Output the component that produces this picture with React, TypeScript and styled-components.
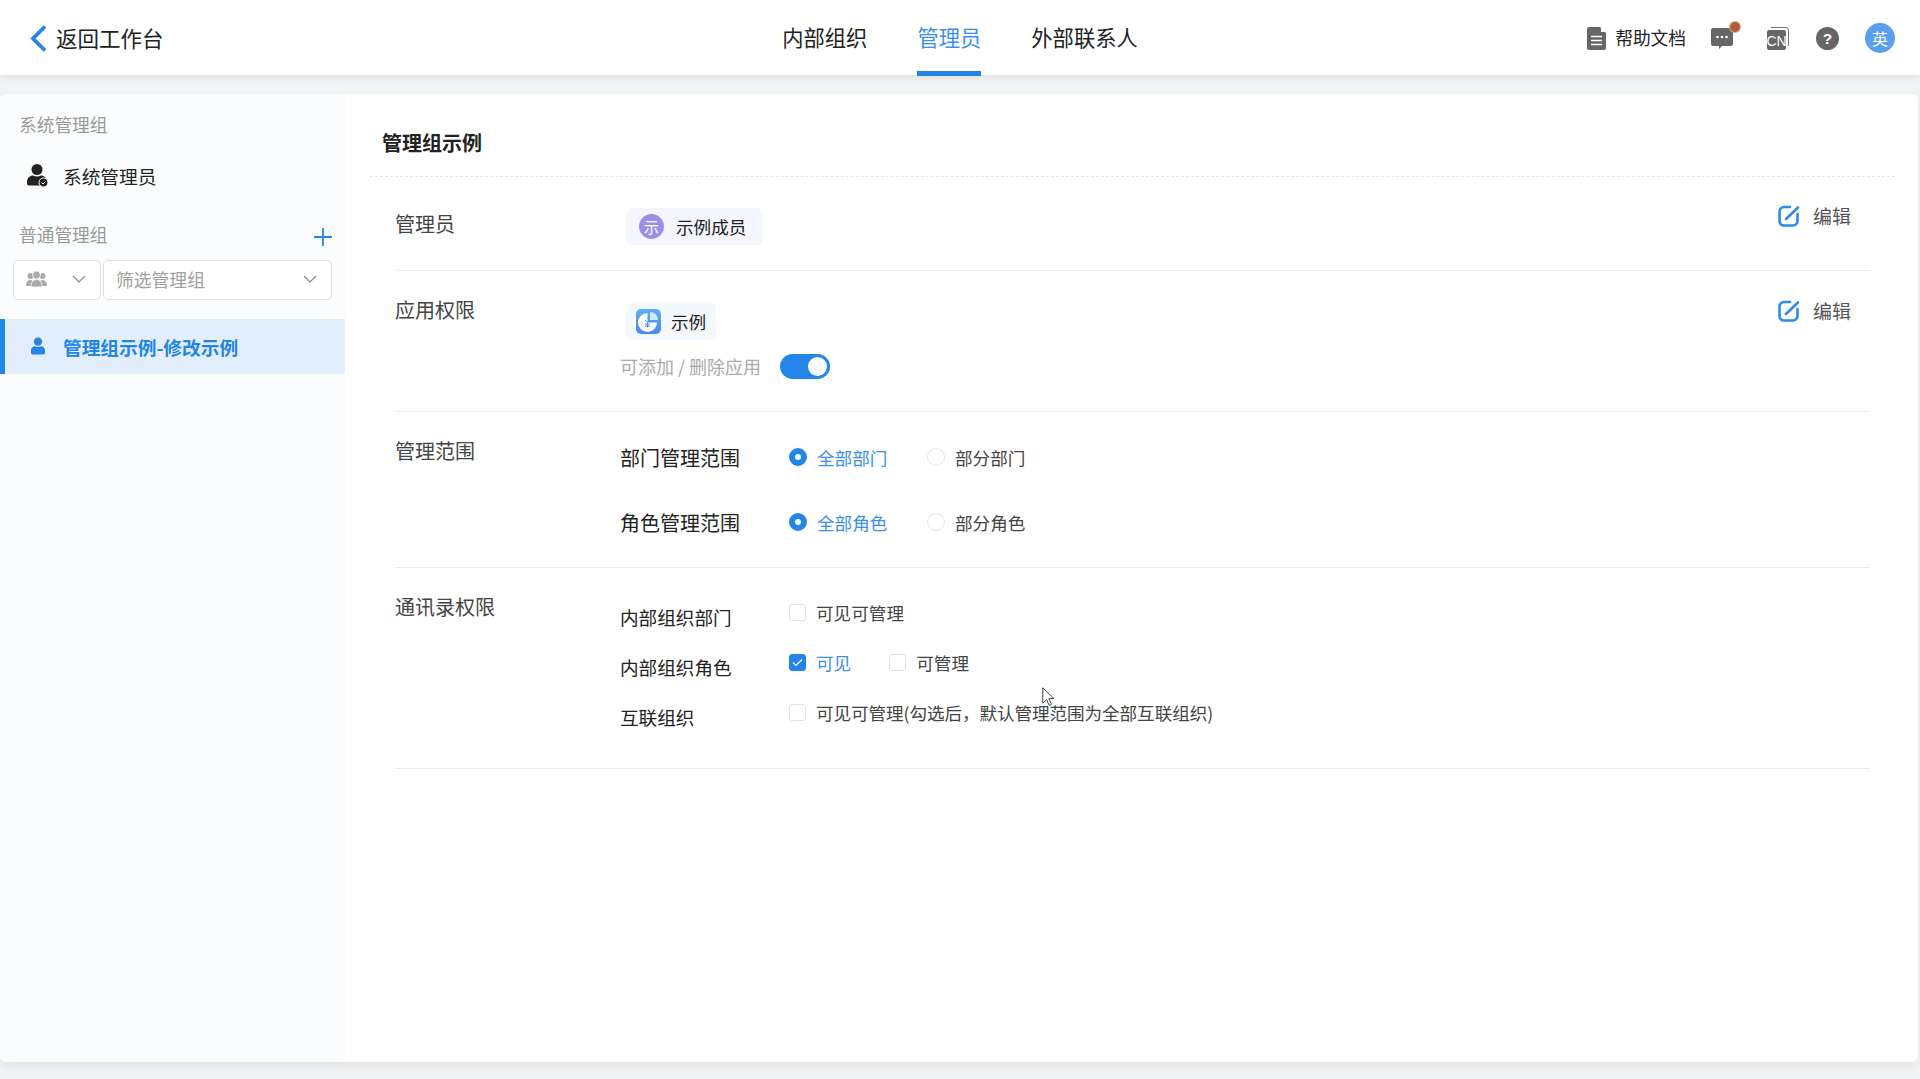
import React from 'react'
import styled, { createGlobalStyle } from 'styled-components'

const BLUE = '#2385e8'

const Global = createGlobalStyle`
  html, body {
    margin: 0;
    padding: 0;
    background: #f2f3f5;
    font-family: "Noto Sans CJK SC", "Noto Sans", sans-serif;
    color: #222;
  }
  * {
    box-sizing: border-box;
  }
`

const Page = styled.div`
  position: relative;
  width: 1920px;
  height: 1079px;
  overflow: hidden;
  display: flex;
  flex-direction: column;
`

const Header = styled.header`
  position: relative;
  z-index: 2;
  flex: none;
  height: 75px;
  background: #fff;
  box-shadow: 0 2px 10px rgba(0, 0, 0, 0.09);
  display: grid;
  grid-template-columns: 1fr auto 1fr;
  align-items: center;
  padding: 0 25px 0 29px;
`

const Back = styled.div`
  display: flex;
  align-items: center;
  gap: 9px;
  font-size: 21.5px;
  color: #222;
`

const RaisedText = styled.span`
  margin-top: -2px;
`

const Tabs = styled.nav`
  display: flex;
  gap: 50px;
  height: 100%;
  margin-right: 4px;
`

const Tab = styled.div<{ $active?: boolean }>`
  height: 76px;
  line-height: 74px;
  font-size: 21.3px;
  color: ${(p) => (p.$active ? '#3b8fe8' : '#222')};
  border-bottom: 5px solid ${(p) => (p.$active ? BLUE : 'transparent')};
`

const Tools = styled.div`
  display: flex;
  align-items: center;
  justify-content: flex-end;
`

const DocLink = styled.div`
  display: flex;
  align-items: center;
  gap: 9px;
  font-size: 17.7px;
  margin-right: 25px;
`

const ToolIcon = styled.div<{ $gap: number }>`
  position: relative;
  display: flex;
  margin-right: ${(p) => p.$gap}px;
`

const Dot = styled.span`
  position: absolute;
  top: -5px;
  right: -7px;
  width: 10px;
  height: 10px;
  border-radius: 50%;
  background: #ad5f3b;
  box-shadow: 0 0 0 1px #e8a77f;
`

const UserAvatar = styled.div`
  width: 30px;
  height: 30px;
  border-radius: 50%;
  background: #5a9fee;
  color: #fff;
  font-size: 16px;
  display: flex;
  align-items: center;
  justify-content: center;
`

const Panel = styled.main`
  flex: none;
  height: 968px;
  margin: 19px 2px 0 0;
  background: #fff;
  border-radius: 6px;
  box-shadow: 0 4px 10px rgba(0, 0, 0, 0.07);
  display: flex;
  overflow: hidden;
`

const Sidebar = styled.aside`
  flex: none;
  width: 345px;
  background: #fbfcfe;
  padding-top: 16px;
`

const GroupTitle = styled.div`
  display: flex;
  align-items: center;
  justify-content: space-between;
  padding: 0 13px 0 19px;
  height: 28px;
  font-size: 17.7px;
  color: #999;
`

const AddIcon = styled.svg`
  margin-top: 5px;
`

const AdminRow = styled.div`
  display: flex;
  align-items: center;
  gap: 15px;
  height: 50px;
  margin: 12px 0 20px;
  padding-left: 27px;
  font-size: 18.7px;
  color: #222;
`

const Filters = styled.div`
  display: flex;
  gap: 2px;
  margin: 12px 13px 19px;
`

const Select = styled.div<{ $width: number }>`
  flex: none;
  width: ${(p) => p.$width}px;
  height: 40px;
  padding: 0 14px 2px 12px;
  background: #fff;
  border: 1px solid #dcdfe6;
  border-radius: 5px;
  display: flex;
  align-items: center;
  justify-content: space-between;
  font-size: 17.8px;
  color: #a0a0a0;
`

const ActiveItem = styled.div`
  height: 55px;
  display: flex;
  align-items: center;
  gap: 17px;
  padding: 0 0 1px 25px;
  background: #e2eefb;
  border-left: 5px solid ${BLUE};
  font-size: 18.7px;
  font-weight: 700;
  color: ${BLUE};
`

const Content = styled.section`
  flex: 1;
  padding: 0 23px 0 25px;
`

const Title = styled.h2`
  margin: 0 0 8px;
  height: 83px;
  line-height: 98px;
  padding-left: 12px;
  font-size: 20px;
  font-weight: 700;
  color: #222;
  border-bottom: 1px dashed #e4e6eb;
`

const Row = styled.div<{ $bottom: number }>`
  position: relative;
  display: flex;
  margin: 0 25px;
  padding: 24px 0 ${(p) => p.$bottom}px;
  border-bottom: 1px solid #e8eaf0;
`

const RowLabel = styled.div`
  flex: none;
  width: 225px;
  font-size: 20px;
  line-height: 30px;
  color: #444;
`

const RowBody = styled.div<{ $top?: number; $gap?: number }>`
  flex: 1;
  margin-top: ${(p) => p.$top ?? 0}px;
  display: flex;
  flex-direction: column;
  gap: ${(p) => p.$gap ?? 0}px;
`

const Chip = styled.div<{ $bg: string; $width: number; $pad: number; $gap: number }>`
  width: ${(p) => p.$width}px;
  height: 37px;
  margin-left: 6px;
  padding-left: ${(p) => p.$pad}px;
  display: flex;
  align-items: center;
  gap: ${(p) => p.$gap}px;
  border-radius: 6px;
  background: ${(p) => p.$bg};
  font-size: 17.6px;
  color: #222;
`

const MemberAvatar = styled.span`
  width: 25px;
  height: 25px;
  border-radius: 50%;
  background: #9b90e8;
  color: #fff;
  font-size: 15px;
  display: flex;
  align-items: center;
  justify-content: center;
`

const Edit = styled.div<{ $top: number }>`
  position: absolute;
  top: ${(p) => p.$top}px;
  right: 19px;
  display: flex;
  align-items: center;
  gap: 13px;
  font-size: 19px;
  color: #555;
`

const SwitchRow = styled.div`
  display: flex;
  align-items: center;
  gap: 19px;
  margin-top: 13px;
  font-size: 18px;
  color: #aaa;
`

const Switch = styled.span`
  width: 50px;
  height: 25px;
  padding: 3px;
  border-radius: 13px;
  background: ${BLUE};
  display: flex;
  justify-content: flex-end;
  &::after {
    content: '';
    width: 19px;
    height: 19px;
    border-radius: 50%;
    background: #fff;
  }
`

const SettingRow = styled.div`
  display: flex;
  align-items: flex-start;
  height: 30px;
`

const SettingLabel = styled.div<{ $size: number }>`
  flex: none;
  width: 169px;
  font-size: ${(p) => p.$size}px;
  line-height: 30px;
  color: #222;
`

const Options = styled.div<{ $gap: number; $height: number }>`
  height: ${(p) => p.$height}px;
  display: flex;
  align-items: center;
  gap: ${(p) => p.$gap}px;
`

const Option = styled.div<{ $on?: boolean; $width?: number; $tight?: boolean }>`
  display: flex;
  align-items: center;
  gap: 10px;
  width: ${(p) => (p.$width ? `${p.$width}px` : 'auto')};
  font-size: 17.6px;
  letter-spacing: ${(p) => (p.$tight ? '-0.08px' : 'normal')};
  white-space: nowrap;
  color: ${(p) => (p.$on ? '#3b8fe8' : '#444')};
`

const Radio = styled.span<{ $on?: boolean }>`
  flex: none;
  width: 18px;
  height: 18px;
  border-radius: 50%;
  background: #fff;
  border: ${(p) => (p.$on ? `6px solid ${BLUE}` : '1px solid #e3e5ea')};
`

const Check = styled.span<{ $on?: boolean }>`
  flex: none;
  width: 17px;
  height: 17px;
  border-radius: 3px;
  display: flex;
  background: ${(p) => (p.$on ? BLUE : '#fff')};
  border: 1px solid ${(p) => (p.$on ? BLUE : '#dfe1e6')};
`

const Cursor = styled.svg`
  position: absolute;
  left: 1042px;
  top: 687px;
  z-index: 3;
`

const Chevron = ({ color = '#888' }: { color?: string }) => (
  <svg width="14" height="8" viewBox="0 0 14 8" fill="none">
    <path d="M1 1l6 6 6-6" stroke={color} strokeWidth="1.2" />
  </svg>
)

const Person = ({ color }: { color: string }) => (
  <svg width="16" height="18" viewBox="0 0 16 18" fill={color}>
    <circle cx="8" cy="4.6" r="4.2" />
    <path d="M1 13.4c0-2.8 2.6-4.2 4-4.2 1 .5 1.900.8 3 .8s2-.3 3-.8c1.400 0 4 1.400 4 4.200v2.400c0 1-.8 1.800-1.800 1.800H2.800c-1 0-1.800-.8-1.800-1.800z" />
  </svg>
)

const EditIcon = () => (
  <svg width="22" height="22" viewBox="0 0 22 22" fill="none" stroke="#2a8bee" strokeWidth="2.600" strokeLinecap="round">
    <path d="M12 2H6a4.500 4.500 0 0 0-4.500 4.500v9A4.500 4.500 0 0 0 6 20.500h9a4.500 4.500 0 0 0 4.500-4.500V9" />
    <path d="M8 14L20 2.500" />
  </svg>
)

const App = () => (
  <Page>
    <Global />
    <Header>
      <Back>
        <svg width="18" height="27" viewBox="0 0 18 27" fill="none">
          <path d="M16 1.500L4 13.500l12 12" stroke={BLUE} strokeWidth="3.800" />
        </svg>
        <RaisedText>返回工作台</RaisedText>
      </Back>
      <Tabs>
        <Tab>内部组织</Tab>
        <Tab $active>管理员</Tab>
        <Tab>外部联系人</Tab>
      </Tabs>
      <Tools>
        <DocLink>
          <svg width="19" height="23" viewBox="0 0 19 23">
            <path d="M2 0h11l6 6v15a2 2 0 0 1-2 2H2a2 2 0 0 1-2-2V2a2 2 0 0 1 2-2z" fill="#666" />
            <path d="M14 0l5 5h-5z" fill="#fff" />
            <path d="M4 9.500h11M4 13.500h11M4 17.500h11" stroke="#fff" strokeWidth="1.600" />
          </svg>
          <RaisedText>帮助文档</RaisedText>
        </DocLink>
        <ToolIcon $gap={34}>
          <svg width="22" height="23" viewBox="0 0 22 23">
            <path d="M2 1h18a2 2 0 0 1 2 2v14a2 2 0 0 1-2 2H11l-3 3v-3H2a2 2 0 0 1-2-2V3a2 2 0 0 1 2-2z" fill="#666" />
            <circle cx="6.500" cy="10" r="1.300" fill="#fff" />
            <circle cx="11" cy="10" r="1.300" fill="#fff" />
            <circle cx="15.500" cy="10" r="1.300" fill="#fff" />
          </svg>
          <Dot />
        </ToolIcon>
        <ToolIcon $gap={27}>
          <svg width="22" height="23" viewBox="0 0 22 23">
            <path d="M4 .5h15a2.500 2.500 0 0 1 2.500 2.500v16" fill="none" stroke="#777" strokeWidth="1" />
            <rect x="0" y="3" width="19" height="20" rx="2" fill="#666" />
            <text x="9.500" y="18.500" textAnchor="middle" fontSize="14" fill="#fff" fontFamily="Liberation Sans, sans-serif">CN</text>
          </svg>
        </ToolIcon>
        <ToolIcon $gap={26}>
          <svg width="23" height="23" viewBox="0 0 23 23">
            <circle cx="11.500" cy="11.500" r="11.500" fill="#666" />
            <text x="11.500" y="17" textAnchor="middle" fontSize="15.500" fontWeight="700" fill="#fff" fontFamily="Liberation Sans, sans-serif">?</text>
          </svg>
        </ToolIcon>
        <UserAvatar>英</UserAvatar>
      </Tools>
    </Header>

    <Panel>
      <Sidebar>
        <GroupTitle>系统管理组</GroupTitle>
        <AdminRow>
          <svg width="21" height="23" viewBox="0 0 21 23">
            <circle cx="10" cy="5.500" r="5.500" fill="#222" />
            <path d="M0 18c0-4 3-6.500 6-6.500 1.200.6 2.600 1 4 1s2.800-.4 4-1c3 0 6 2.500 6 6.500v1.500c0 1-.8 2-2 2H2c-1.200 0-2-1-2-2z" fill="#222" />
            <circle cx="16.500" cy="18.500" r="4.500" fill="#222" stroke="#fbfcfe" strokeWidth="1" />
            <path d="M14.500 18.500l1.500 1.500 2.500-2.500" fill="none" stroke="#fff" strokeWidth="1" />
          </svg>
          系统管理员
        </AdminRow>
        <GroupTitle>
          普通管理组
          <AddIcon width="18" height="18" viewBox="0 0 18 18">
            <path d="M9 0v18M0 9h18" stroke={BLUE} strokeWidth="1.800" />
          </AddIcon>
        </GroupTitle>
        <Filters>
          <Select $width={88}>
            <svg width="21" height="16" viewBox="0 0 21 16" fill="#aaa">
              <circle cx="4.500" cy="5" r="3" />
              <circle cx="16.500" cy="5" r="3" />
              <path d="M0 14c0-3 2-5 4.500-5 1 0 1.500.2 2 .5V15H1c-.6 0-1-.4-1-1zM21 14c0-3-2-5-4.500-5-1 0-1.500.2-2 .5V15H20c.6 0 1-.4 1-1z" />
              <circle cx="10.500" cy="4" r="4" stroke="#fff" strokeWidth=".8" />
              <path d="M5 15c0-4 2.500-6.500 5.500-6.500S16 11 16 15c0 .6-.4 1-1 1H6c-.6 0-1-.4-1-1z" stroke="#fff" strokeWidth=".8" />
            </svg>
            <Chevron />
          </Select>
          <Select $width={229}>
            筛选管理组
            <Chevron />
          </Select>
        </Filters>
        <ActiveItem>
          <Person color={BLUE} />
          管理组示例-修改示例
        </ActiveItem>
      </Sidebar>

      <Content>
        <Title>管理组示例</Title>

        <Row $bottom={25}>
          <RowLabel>管理员</RowLabel>
          <RowBody $top={-1}>
            <Chip $bg="#f3f6fd" $width={137} $pad={13} $gap={12}>
              <MemberAvatar>示</MemberAvatar>
              示例成员
            </Chip>
          </RowBody>
          <Edit $top={17}>
            <EditIcon />
            编辑
          </Edit>
        </Row>

        <Row $bottom={32}>
          <RowLabel>应用权限</RowLabel>
          <RowBody $top={8}>
            <Chip $bg="#f3f8fd" $width={90} $pad={10} $gap={10}>
              <svg width="25" height="25" viewBox="0 0 25 25">
                <defs>
                  <linearGradient id="appBg" x1="0" y1="0" x2="0" y2="1">
                    <stop offset="0" stopColor="#5db0f5" />
                    <stop offset="1" stopColor="#4a86ee" />
                  </linearGradient>
                </defs>
                <rect width="25" height="25" rx="5" fill="url(#appBg)" />
                <path d="M11.500 4a9.500 9.500 0 1 0 9.500 9.500h-9.500z" fill="#fff" />
                <path d="M14 3a8 8 0 0 1 8 8h-8z" fill="#d5e8fb" />
                <path d="M9 11l2.500 2.500L14 11M11.500 13.500v5M9 15h5M9 17h5" fill="none" stroke="#4a90ee" strokeWidth="1" />
              </svg>
              示例
            </Chip>
            <SwitchRow>
              可添加 / 删除应用
              <Switch />
            </SwitchRow>
          </RowBody>
          <Edit $top={26}>
            <EditIcon />
            编辑
          </Edit>
        </Row>

        <Row $bottom={29}>
          <RowLabel>管理范围</RowLabel>
          <RowBody $top={7} $gap={35}>
            <SettingRow>
              <SettingLabel $size={20}>部门管理范围</SettingLabel>
              <Options $gap={20} $height={28}>
                <Option $on $width={118}>
                  <Radio $on />
                  全部部门
                </Option>
                <Option>
                  <Radio />
                  部分部门
                </Option>
              </Options>
            </SettingRow>
            <SettingRow>
              <SettingLabel $size={20}>角色管理范围</SettingLabel>
              <Options $gap={20} $height={28}>
                <Option $on $width={118}>
                  <Radio $on />
                  全部角色
                </Option>
                <Option>
                  <Radio />
                  部分角色
                </Option>
              </Options>
            </SettingRow>
          </RowBody>
        </Row>

        <Row $bottom={36}>
          <RowLabel>通讯录权限</RowLabel>
          <RowBody $top={10} $gap={20}>
            <SettingRow>
              <SettingLabel $size={18.6}>内部组织部门</SettingLabel>
              <Options $gap={38} $height={20}>
                <Option>
                  <Check />
                  可见可管理
                </Option>
              </Options>
            </SettingRow>
            <SettingRow>
              <SettingLabel $size={18.6}>内部组织角色</SettingLabel>
              <Options $gap={38} $height={20}>
                <Option $on>
                  <Check $on>
                    <svg width="15" height="15" viewBox="0 0 15 15" fill="none">
                      <path d="M3 7.500l3 3 6-6" stroke="#fff" strokeWidth="1.200" />
                    </svg>
                  </Check>
                  可见
                </Option>
                <Option>
                  <Check />
                  可管理
                </Option>
              </Options>
            </SettingRow>
            <SettingRow>
              <SettingLabel $size={18.6}>互联组织</SettingLabel>
              <Options $gap={38} $height={20}>
                <Option $tight>
                  <Check />
                  可见可管理(勾选后，默认管理范围为全部互联组织)
                </Option>
              </Options>
            </SettingRow>
          </RowBody>
        </Row>
      </Content>
    </Panel>

    <Cursor width="13" height="20" viewBox="0 0 17 26">
      <path d="M1 1v20l5-4.500 3.500 7.500 3-1.500L9 15h6.500z" fill="#fff" stroke="#333" strokeWidth="1.200" />
    </Cursor>
  </Page>
)

export default App
